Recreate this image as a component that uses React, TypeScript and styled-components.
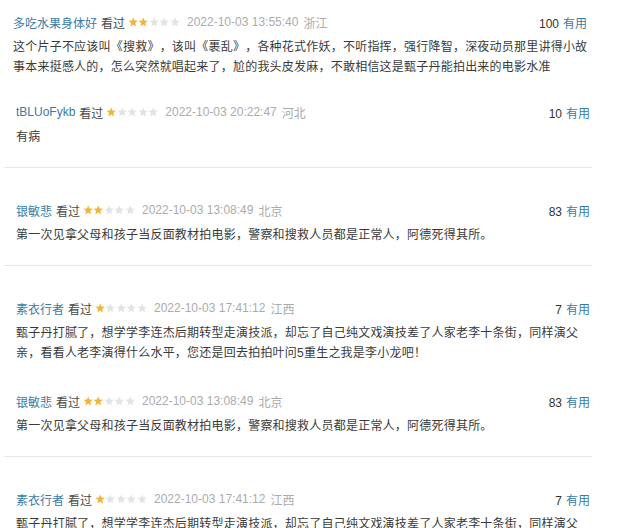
import React from 'react';
import styled, { createGlobalStyle } from 'styled-components';

const GlobalStyle = createGlobalStyle`
    body {
        margin: 0;
        background: #fff;
        font-family: "Liberation Sans", "Noto Sans CJK SC", sans-serif;
    }
`

type Review = {
    name: string
    rating: number
    time: string
    location: string
    votes: number
    lines: string[]
    divided: boolean
    first?: boolean
}

const jiaoLines = [
    '甄子丹打腻了，想学学李连杰后期转型走演技派，却忘了自己纯文戏演技差了人家老李十条街，同样演父',
    '亲，看看人老李演得什么水平，您还是回去拍拍叶问5重生之我是李小龙吧！',
]

const reviews: Review[] = [
    {
        name: '多吃水果身体好', rating: 2, time: '2022-10-03 13:55:40', location: '浙江', votes: 100,
        lines: [
            '这个片子不应该叫《搜救》，该叫《裹乱》，各种花式作妖，不听指挥，强行降智，深夜动员那里讲得小故',
            '事本来挺感人的，怎么突然就唱起来了，尬的我头皮发麻，不敢相信这是甄子丹能拍出来的电影水准',
        ],
        divided: false, first: true,
    },
    {
        name: 'tBLUoFykb', rating: 1, time: '2022-10-03 20:22:47', location: '河北', votes: 10,
        lines: ['有病'], divided: true,
    },
    {
        name: '银敏悲', rating: 2, time: '2022-10-03 13:08:49', location: '北京', votes: 83,
        lines: ['第一次见拿父母和孩子当反面教材拍电影，警察和搜救人员都是正常人，阿德死得其所。'], divided: true,
    },
    {
        name: '素衣行者', rating: 1, time: '2022-10-03 17:41:12', location: '江西', votes: 7,
        lines: jiaoLines, divided: false,
    },
    {
        name: '银敏悲', rating: 2, time: '2022-10-03 13:08:49', location: '北京', votes: 83,
        lines: ['第一次见拿父母和孩子当反面教材拍电影，警察和搜救人员都是正常人，阿德死得其所。'], divided: true,
    },
    {
        name: '素衣行者', rating: 1, time: '2022-10-03 17:41:12', location: '江西', votes: 7,
        lines: jiaoLines, divided: false,
    },
]

const Star = ({ on }: { on: boolean }) => (
    <svg width="10.4" height="10" viewBox="0 0 10.4 10">
        <path
            d="M5.2 0.4 L6.5 3.6 L9.9 3.8 L7.3 6 L8.1 9.4 L5.2 7.6 L2.3 9.4 L3.1 6 L0.5 3.8 L3.9 3.6 Z"
            fill={on ? '#f3b43a' : '#e3e3e3'}
        />
    </svg>
)

const App = () => {
    return (
        <StyledWrapper>
            <GlobalStyle />
            {
                reviews.map((r, idx) => (
                    <StyledItem key={idx} $divided={r.divided} $first={!!r.first}>
                        <StyledHeader>
                            <StyledInfo>
                                <span className="name">{r.name}</span>
                                <span className="status">看过</span>
                                <StyledStars>
                                    {[0, 1, 2, 3, 4].map(i => <Star key={i} on={i < r.rating} />)}
                                </StyledStars>
                                <span className="time">{r.time}</span>
                                <span className="loc">{r.location}</span>
                            </StyledInfo>
                            <StyledVotes>
                                <span className="count">{r.votes}</span>
                                <span className="useful">有用</span>
                            </StyledVotes>
                        </StyledHeader>
                        <StyledContent>
                            {r.lines.map((l, i) => <span key={i}>{l}</span>)}
                        </StyledContent>
                    </StyledItem>
                ))
            }
        </StyledWrapper>
    )
}

const StyledWrapper = styled.section`
    width: 619px;
    padding-top: 12px;
    box-sizing: border-box;
`

const StyledItem = styled.div<{ $divided: boolean; $first: boolean }>`
    width: 588px;
    margin-left: 4px;
    box-sizing: border-box;
    padding: ${p => p.$first ? '0 5px 0 9px' : '0 2px 0 12px'};
    padding-bottom: ${p => p.$divided ? '20px' : '0'};
    margin-bottom: ${p => p.$divided ? '32px' : p.$first ? '25px' : '28px'};
    border-bottom: ${p => p.$divided ? '1px solid #e8e8e8' : 'none'};
`

const StyledHeader = styled.div`
    display: flex;
    align-items: center;
    justify-content: space-between;
    height: 20px;
    margin-bottom: 5px;
    font-size: 12px;
`

const StyledInfo = styled.div`
    display: flex;
    align-items: center;
    white-space: nowrap;
    .name {
        color: #3a7ba5;
    }
    .status {
        color: #494949;
        margin-left: 4px;
    }
    .time {
        color: #ababab;
    }
    .loc {
        color: #ababab;
        margin-left: 5px;
    }
`

const StyledStars = styled.span`
    display: inline-flex;
    align-items: center;
    margin: 0 7px 0 3px;
    svg {
        display: block;
    }
`

const StyledVotes = styled.div`
    white-space: nowrap;
    .count {
        color: #333;
        margin-right: 4px;
    }
    .useful {
        color: #3a7ba5;
    }
`

const StyledContent = styled.div`
    display: flex;
    flex-direction: column;
    font-size: 12px;
    line-height: 20px;
    color: #3a3a3a;
    letter-spacing: 0.22px;
    text-spacing-trim: space-all;
    span {
        white-space: nowrap;
    }
`

export default App
